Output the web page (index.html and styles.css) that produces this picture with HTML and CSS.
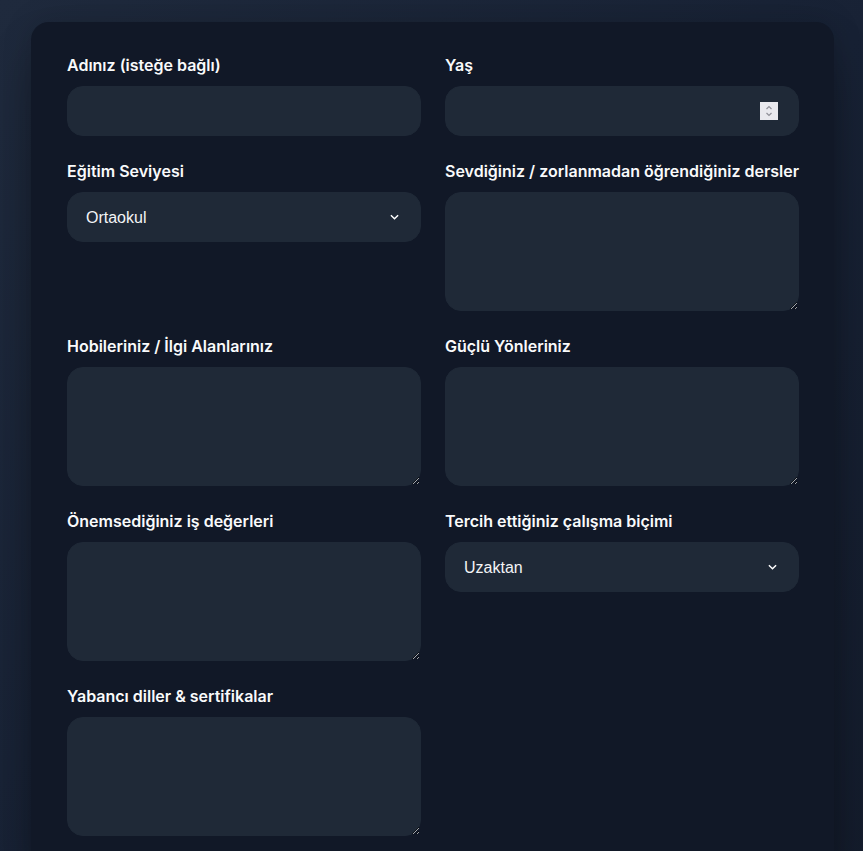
FILE: index.html
```html
<!DOCTYPE html>
<html lang="tr">
<head>
<meta charset="utf-8">
<title>Form</title>
<link rel="stylesheet" href="styles.css">
</head>
<body>
<main class="page">
  <form class="card">
    <div class="grid">
      <div class="field">
        <label class="label">Adınız (isteğe bağlı)</label>
        <input class="control" type="text">
      </div>
      <div class="field">
        <label class="label">Yaş</label>
        <input class="control number" type="number">
      </div>
      <div class="field">
        <label class="label">Eğitim Seviyesi</label>
        <select class="control select"><option>Ortaokul</option></select>
      </div>
      <div class="field">
        <label class="label">Sevdiğiniz / zorlanmadan öğrendiğiniz dersler</label>
        <textarea class="control area"></textarea>
      </div>
      <div class="field">
        <label class="label">Hobileriniz / İlgi Alanlarınız</label>
        <textarea class="control area"></textarea>
      </div>
      <div class="field">
        <label class="label">Güçlü Yönleriniz</label>
        <textarea class="control area"></textarea>
      </div>
      <div class="field">
        <label class="label">Önemsediğiniz iş değerleri</label>
        <textarea class="control area"></textarea>
      </div>
      <div class="field">
        <label class="label">Tercih ettiğiniz çalışma biçimi</label>
        <select class="control select"><option>Uzaktan</option></select>
      </div>
      <div class="field">
        <label class="label">Yabancı diller &amp; sertifikalar</label>
        <textarea class="control area"></textarea>
      </div>
    </div>
  </form>
</main>
</body>
</html>
```
FILE: styles.css
```css
html, body {
  margin: 0;
  padding: 0;
}
body {
  min-height: 100vh;
  background: linear-gradient(135deg, #1f2a3d 0%, #182235 50%, #141c2c 100%);
  font-family: Inter, "Noto Sans", sans-serif;
  color: #f3f4f6;
}
.page {
  padding: 22px 29px 40px 31px;
}
.card {
  background: #111827;
  border-radius: 18px;
  padding: 31px 35px 40px 36px;
  box-shadow: 0 25px 50px -12px rgba(0, 0, 0, 0.45), 0 0 30px rgba(0, 0, 0, 0.15);
}
.grid {
  display: grid;
  grid-template-columns: 354px 354px;
  column-gap: 24px;
  row-gap: 23px;
  align-items: start;
}
.field {
  display: flex;
  flex-direction: column;
}
.label {
  font-family: Inter, sans-serif;
  font-weight: 600;
  font-size: 16px;
  line-height: 24px;
  margin-bottom: 9px;
  color: #f9fafb;
  white-space: nowrap;
}
.control {
  box-sizing: border-box;
  width: 100%;
  height: 50px;
  background-color: #1f2937;
  border: 1px solid #1f2937;
  border-radius: 16px;
  color: #f3f4f6;
  font-family: "Liberation Sans", Arial, sans-serif;
  font-size: 16px;
  padding: 0 18px;
  outline: none;
  margin: 0;
}
.number {
  -moz-appearance: textfield;
  background-image: url("data:image/svg+xml,%3Csvg xmlns='http://www.w3.org/2000/svg' width='18' height='18' viewBox='0 0 18 18'%3E%3Crect width='18' height='18' fill='%23e9e9ee'/%3E%3Cpath d='M6.5 7l2.5-2.5L11.5 7M6.5 11l2.5 2.5L11.5 11' fill='none' stroke='%23909098' stroke-width='1.2'/%3E%3C/svg%3E");
  background-repeat: no-repeat;
  background-position: right 20px center;
  background-size: 18px 18px;
}
.number::-webkit-inner-spin-button,
.number::-webkit-outer-spin-button {
  -webkit-appearance: none;
  display: none;
  margin: 0;
}
.select {
  appearance: none;
  -webkit-appearance: none;
  background-image: url("data:image/svg+xml,%3Csvg xmlns='http://www.w3.org/2000/svg' width='10' height='6' viewBox='0 0 10 6'%3E%3Cpath d='M1 1l4 4 4-4' fill='none' stroke='%23ffffff' stroke-width='1.6'/%3E%3C/svg%3E");
  background-repeat: no-repeat;
  background-position: right 21px center;
  background-size: 9px 6px;
}
.area {
  height: 119px;
  padding: 12px 18px;
  resize: vertical;
  display: block;
}
```
